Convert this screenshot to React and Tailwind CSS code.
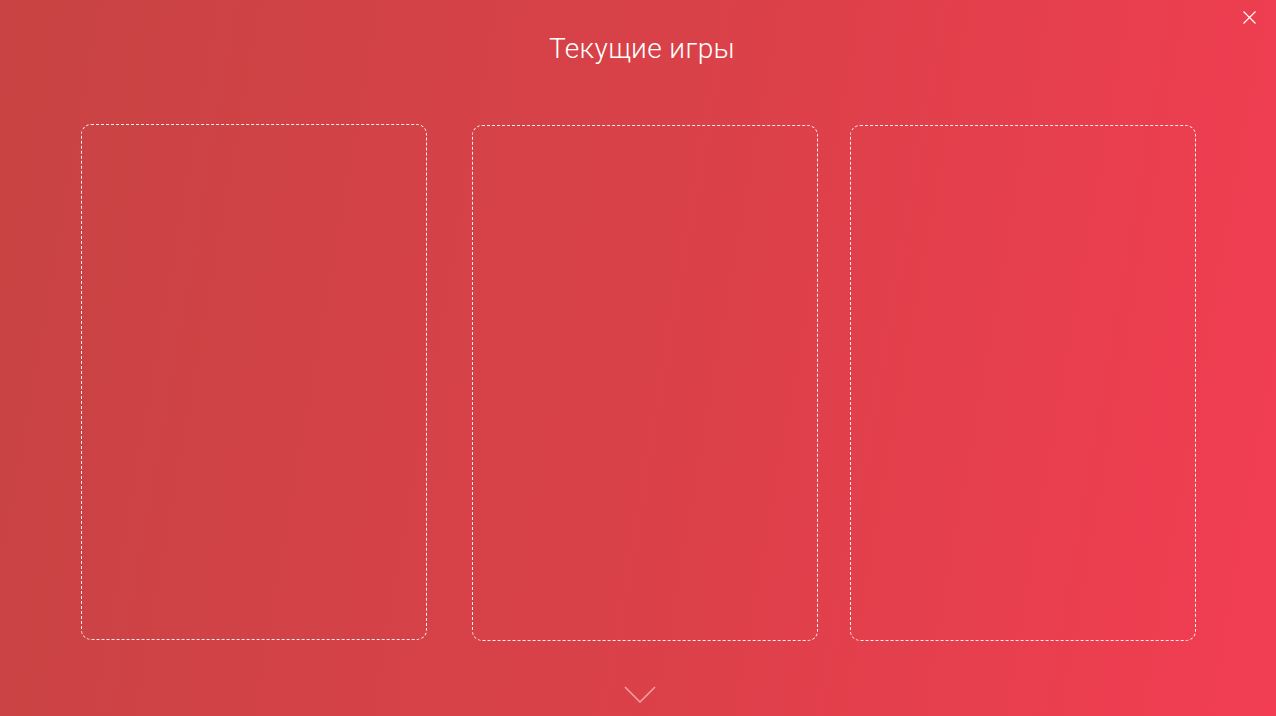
import React from 'react'

const Card = ({ className }) => (
  <div className={`w-[346px] h-[516px] rounded-[10px] border border-dashed border-white/90 ${className || ''}`} />
)

const App = () => {
  return (
    <div className='relative w-full h-[716px] overflow-hidden bg-[linear-gradient(100deg,#c84343_0%,#d94148_50%,#f23d52_100%)] text-white' style={{ fontFamily: 'Roboto, "Open Sans", sans-serif' }}>
      <button className='absolute right-[20px] top-[11px] w-[13px] h-[13px]'>
        <svg viewBox='0 0 13 13' width='13' height='13' fill='none' stroke='white' strokeWidth='1.1'>
          <path d='M0.5 0.5L12.5 12.5M12.5 0.5L0.5 12.5' />
        </svg>
      </button>

      <h1 className='pt-[31px] text-center text-[28px] font-light leading-[36px] tracking-[0.4px] pl-[8px]'>Текущие игры</h1>

      <div className='flex pl-[81px] mt-[57px]'>
        <Card />
        <Card className='ml-[45px] mt-[1px]' />
        <Card className='ml-[32px] mt-[1px]' />
      </div>

      <div className='flex justify-center mt-[45px] pl-[4px]'>
        <svg viewBox='0 0 32 17' width='32' height='17' fill='none' stroke='#f6a0a6' strokeWidth='1.5'>
          <path d='M1 1L16 16L31 1' />
        </svg>
      </div>
    </div>
  )
}

export default App
